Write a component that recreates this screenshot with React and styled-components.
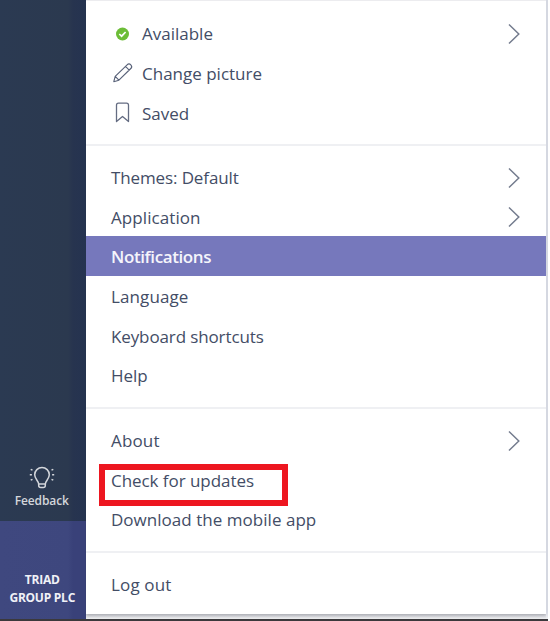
import React from 'react';
import styled, { createGlobalStyle } from 'styled-components';

const GlobalStyle = createGlobalStyle`
  * {
    box-sizing: border-box;
  }
  body {
    margin: 0;
    background: #fff;
    font-family: 'Open Sans', 'Noto Sans', sans-serif;
    overflow: hidden;
  }
`;

const Window = styled.div`
  display: flex;
  width: 548px;
  height: 621px;
  border-bottom: 2px solid #3b393c;
`;

const Sidebar = styled.aside`
  display: flex;
  flex-direction: column;
  justify-content: flex-end;
  flex: none;
  width: 85.5px;
  background: linear-gradient(90deg, #2b3a52 0, #2b394f 68px, #27344f 73px, #253350 100%);
  color: #fff;
  text-align: center;
`;

const Feedback = styled.div`
  display: flex;
  flex-direction: column;
  align-items: center;
  height: 57px;
  padding-right: 2px;
  color: #d3d6db;
  font-size: 12px;
  font-weight: 600;
  line-height: 18px;
  letter-spacing: -0.1px;
`;

const Tenant = styled.div`
  height: 98px;
  padding: 50px 1px 0 0;
  background: linear-gradient(90deg, #3f487f 0, #3e477e 68px, #394179 73px, #394179 100%);
  color: #f0f1f7;
  font-size: 12px;
  font-weight: 700;
  line-height: 18px;
  letter-spacing: -0.25px;
`;

const Backdrop = styled.main`
  flex: 1;
  padding-right: 2px;
  background: linear-gradient(#d5d8e1 0, #d5d8e1 612px, #f0f0f2 619px);
`;

const Menu = styled.nav`
  height: 614px;
  border-top: 1px solid #ececef;
  background: #fff;
  box-shadow: 0 2px 3px rgba(60, 60, 65, 0.3);
  clip-path: inset(0 0 -5px 0);
`;

const Section = styled.section`
  padding: ${(props) => props.$top || '11px'} 0 12px;
  border-bottom: ${(props) => (props.$last ? 'none' : '2px solid #eff0f3')};
`;

const Item = styled.div`
  position: relative;
  display: flex;
  align-items: center;
  height: 39.65px;
  padding: ${(props) => (props.$active ? '1px' : '2px')} 26px 0 25.5px;
  background: ${(props) => (props.$active ? '#7678bc' : 'transparent')};
  color: ${(props) => (props.$active ? '#f5f5fb' : '#434d66')};
  font-size: 17px;
  font-weight: ${(props) => (props.$active ? 600 : 400)};
`;

const Label = styled.span`
  flex: 1;
  letter-spacing: ${(props) => props.$spacing || 0}px;
  white-space: nowrap;
`;

const IconSlot = styled.span`
  display: flex;
  width: 31px;
`;

const Highlight = styled.span`
  position: absolute;
  top: 5px;
  left: 13px;
  width: 189px;
  height: 42px;
  border: 6px solid #ed1620;
`;

const Chevron = () => (
  <svg width="12" height="22" viewBox="0 0 12 22" fill="none" stroke="#747c8e" strokeWidth="1.5">
    <path d="M1 1.500l9.800 9.500L1 20.500" />
  </svg>
);

const Available = () => (
  <svg width="24" height="24" viewBox="0 0 24 24" fill="none">
    <circle cx="11.5" cy="12" r="6.5" fill="#6cbd37" />
    <path d="M8.300 12l2.300 2.200 4-4.200" stroke="#fff" strokeWidth="1.7" />
  </svg>
);

const Pencil = () => (
  <svg width="24" height="24" viewBox="0.5 0 24 24" fill="none" stroke="#596279" strokeWidth="1.15">
    <path d="M3.300 20.700l1.400-5.300L16.600 3.800a2.600 2.600 0 0 1 3.700 3.700L8.400 19.200zM4.700 15.400l3.700 3.800M15 5.400l3.700 3.700" strokeLinejoin="round" />
  </svg>
);

const Bookmark = () => (
  <svg width="24" height="24" viewBox="0.5 0 24 24" fill="none" stroke="#646c82" strokeWidth="1.3">
    <path d="M6 20.500V4.200a2 2 0 0 1 2-2h8a2 2 0 0 1 2 2v16.300l-6-5z" strokeLinejoin="round" />
  </svg>
);

const Bulb = () => (
  <svg width="28" height="28" viewBox="0 0 28 28" fill="none" stroke="#d3d6db" strokeWidth="1.5">
    <path d="M10.700 20c0-3-4-5-4-9.200a7.300 7.300 0 0 1 14.600 0c0 4.200-4 6.200-4 9.200z" />
    <path d="M10.700 20v1.500a2 2 0 0 0 2 2h2.600a2 2 0 0 0 2-2V20" />
    <path d="M4.500 6.200L2.700 5.300M3.900 10.800H1.800M4.500 15.300l-1.800.9M23.500 6.200l1.800-.9M24.100 10.800h2.100M23.500 15.300l1.800.9" />
  </svg>
);

const MenuItem = ({ icon, label, spacing, active, more, highlighted }) => (
  <Item $active={active}>
    {icon && <IconSlot>{icon}</IconSlot>}
    <Label $spacing={spacing}>{label}</Label>
    {more && <Chevron />}
    {highlighted && <Highlight />}
  </Item>
);

const App = () => (
  <>
    <GlobalStyle />
    <Window>
      <Sidebar>
        <Feedback>
          <Bulb />
          Feedback
        </Feedback>
        <Tenant>
          TRIAD
          <br />
          GROUP PLC
        </Tenant>
      </Sidebar>
      <Backdrop>
        <Menu>
          <Section $top="12px">
            <MenuItem icon={<Available />} label="Available" more />
            <MenuItem icon={<Pencil />} label="Change picture" />
            <MenuItem icon={<Bookmark />} label="Saved" />
          </Section>
          <Section>
            <MenuItem label="Themes: Default" spacing={-0.12} more />
            <MenuItem label="Application" spacing={0.08} more />
            <MenuItem label="Notifications" spacing={-0.4} active />
            <MenuItem label="Language" spacing={0.1} />
            <MenuItem label="Keyboard shortcuts" spacing={-0.12} />
            <MenuItem label="Help" />
          </Section>
          <Section>
            <MenuItem label="About" spacing={0.15} more />
            <MenuItem label="Check for updates" spacing={-0.05} highlighted />
            <MenuItem label="Download the mobile app" spacing={0.03} />
          </Section>
          <Section $last>
            <MenuItem label="Log out" spacing={0.15} />
          </Section>
        </Menu>
      </Backdrop>
    </Window>
  </>
);

export default App;
